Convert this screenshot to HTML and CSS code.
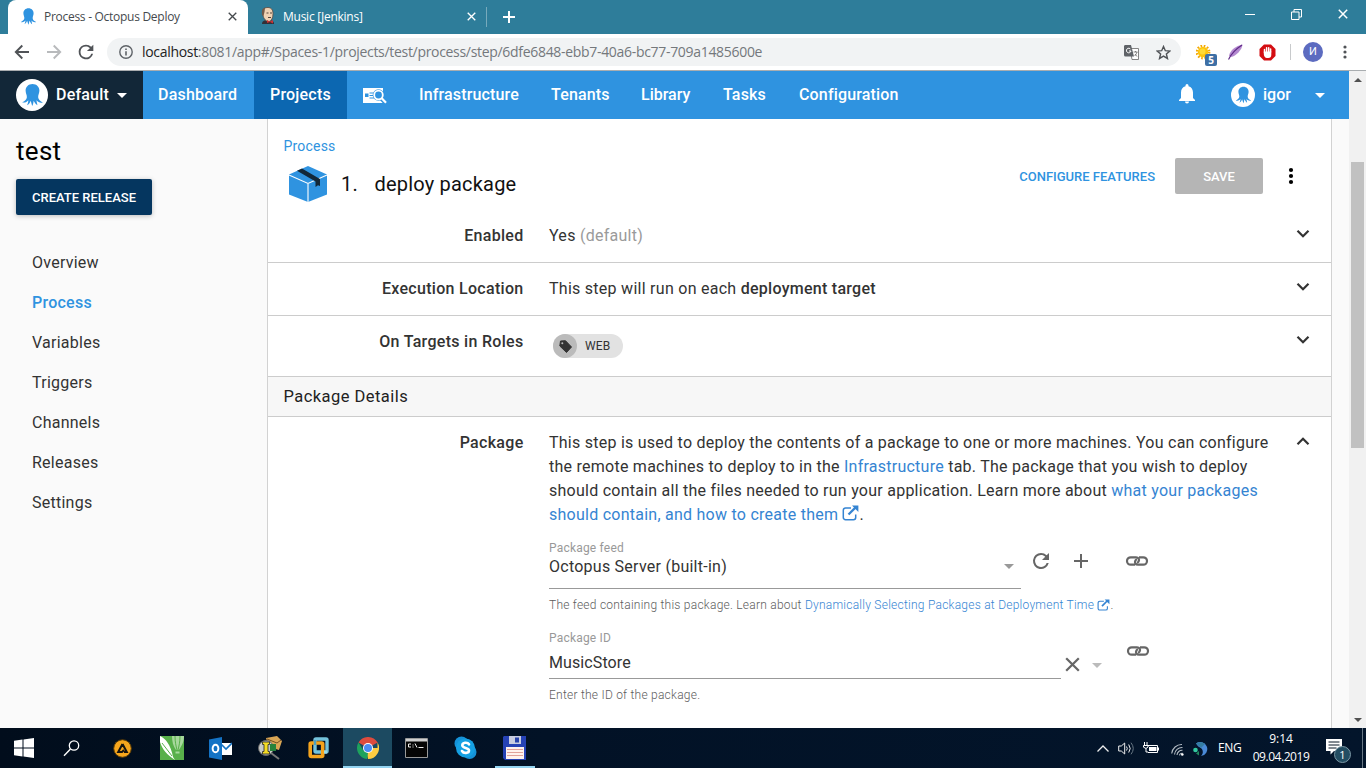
FILE: index.html
```html
<!DOCTYPE html>
<html lang="en">
<head>
<meta charset="utf-8">
<title>Process - Octopus Deploy</title>
<link rel="stylesheet" href="styles.css">
</head>
<body>
<svg class="defs" width="0" height="0">
  <symbol id="octopus" viewBox="0 0 24 24"><path d="M12 .5C7.700.5 4.800 3.500 4.800 7.400c0 2.900 1.600 4.800 1.300 7.200-.3 2.300-2.300 3.900-4.900 5 2.400.9 4.700 0 6.400-2.100.1 1.900-.7 3.700-1.300 5.300 2-.8 3.100-2.700 3.700-4.700.8 1.600.9 3.600 1.700 5.400 1.100-1.600 1.300-3.700 1.500-5.400 1.100 1.500 1.900 3.700 3.900 4.700-.1-1.900-.9-3.400-.9-5.200 1.700 1.900 4 3 6.600 2.200-2.600-1.300-4.800-3-4.900-5.400-.1-2.300 1.300-4.200 1.300-7C19.200 3.500 16.300.5 12 .5z"/></symbol>
  <symbol id="chev" viewBox="0 0 14 10"><path d="M1.500 1.800 7 7.300l5.500-5.500" fill="none" stroke="currentColor" stroke-width="2.200"/></symbol>
  <symbol id="link" viewBox="0 0 24 12"><g fill="none" stroke="currentColor" stroke-width="2.200"><path d="M10 9.700H5.700a3.700 3.700 0 0 1 0-7.400H11c2.600 0 3.700 2.200 2.600 4.200-.4.700-.9 1-1.600 1.300"/><path d="M14 2.300h4.300a3.700 3.700 0 0 1 0 7.400H13c-2.600 0-3.700-2.200-2.600-4.200.4-.7.900-1 1.600-1.300"/></g></symbol>
  <symbol id="ext" viewBox="0 0 17 16"><path d="M9 3H3.500A2.200 2.200 0 0 0 1.300 5.200v7.300a2.200 2.200 0 0 0 2.200 2.200h8a2.200 2.200 0 0 0 2.200-2.200V9.500" fill="none" stroke="currentColor" stroke-width="1.500"/><path d="M6.500 9.500 14 2" stroke="currentColor" stroke-width="2.300"/><path d="M10 .6h6.400V7z" fill="currentColor"/></symbol>
  <symbol id="reload" viewBox="0 0 24 24"><path d="M17.650 6.350A7.960 7.960 0 0 0 12 4a8 8 0 1 0 7.730 10h-2.080A6 6 0 1 1 12 6c1.660 0 3.140.69 4.220 1.780L13 11h7V4z" fill="currentColor"/></symbol>
  <symbol id="cross" viewBox="0 0 10 10"><path d="m.8.8 8.400 8.400M9.200.8.8 9.200" stroke="currentColor" stroke-width="1.500"/></symbol>
</svg>

<header class="tabs">
  <div class="tab active">
    <svg class="fav blue" width="17" height="17"><use href="#octopus"/></svg>
    <span class="t1">Process - Octopus Deploy</span>
    <svg class="close" width="9" height="9"><use href="#cross"/></svg>
  </div>
  <div class="tab second">
    <svg class="fav" width="16" height="18" viewBox="0 0 16 18"><path d="M2 17c0-3 2-4 6-4s6 1 6 4z" fill="#332f36"/><path d="M2.500 5C3 1.500 5 .5 8 .5s5 2 5 6-1.500 8-4.500 8-6-4-6-9.500z" fill="#efd2b4" stroke="#55483f" stroke-width=".8"/><path d="M2 8C1.500 4 2 1 5 .8L4.500 5l-1 4z" fill="#715a49"/><path d="M6.500 6h2M10 6h2M8 10.500h3" stroke="#54443a"/><path d="m7 13 3 1.500 3-1.500v3.500l-3-1.500-3 1z" fill="#c93335"/></svg>
    <span class="t2">Music [Jenkins]</span>
    <svg class="close" width="9" height="9"><use href="#cross"/></svg>
  </div>
  <div class="newtab"><svg width="12" height="12" viewBox="0 0 12 12"><path d="M6 0v12M0 6h12" stroke="#fff" stroke-width="2"/></svg></div>
  <div class="winctl">
    <svg width="10" height="10"><path d="M0 5.500h10" stroke="#fff"/></svg>
    <svg width="11" height="11" viewBox="0 0 11 11"><path d="M.5 3h7.500v7.500H.5zM3 3V.5h7.500V8H8" fill="none" stroke="#fff"/></svg>
    <svg width="10" height="10" class="wclose"><use href="#cross"/></svg>
  </div>
</header>

<div class="toolbar">
  <svg class="nav-i" width="16" height="16" viewBox="0 0 16 16"><path d="M15 8H2M8.300 1.500 1.800 8l6.500 6.500" fill="none" stroke="#505357" stroke-width="1.900"/></svg>
  <svg class="nav-i" width="16" height="16" viewBox="0 0 16 16"><path d="M1 8h13M7.700 1.500 14.200 8l-6.500 6.500" fill="none" stroke="#b8babc" stroke-width="1.900"/></svg>
  <svg class="nav-r" width="22" height="22"><use href="#reload"/></svg>
  <div class="omni">
    <svg width="14" height="14" viewBox="0 0 14 14"><circle cx="7" cy="7" r="6.200" fill="none" stroke="#5f6368" stroke-width="1.400"/><path d="M7 6.200V10.600M7 3.400V5" stroke="#5f6368" stroke-width="1.600"/></svg>
    <span class="url"><b>localhost</b>:8081/app#/Spaces-1/projects/test/process/step/6dfe6848-ebb7-40a6-bc77-709a1485600e</span>
    <svg class="trans" width="15" height="15" viewBox="0 0 15 15"><path d="M6 3.500h8.500v11H8z" fill="#fff" stroke="#777" stroke-width=".9"/><path d="M1 0h6l3 11.500H1.500A1.500 1.500 0 0 1 0 10V1.300A1.300 1.300 0 0 1 1 0z" fill="#5f6368"/><path d="M6.700 4.300A2.300 2.300 0 1 0 7 6H5" fill="none" stroke="#fff" stroke-width="1"/><path d="M9.500 7h4M11.500 6v1M13 7c-.5 2-1.500 3-2.500 4M11 9l2 2.500" fill="none" stroke="#666" stroke-width=".8"/></svg>
    <svg class="star" width="15" height="15" viewBox="0 0 24 24"><path d="m12 2.500 2.900 6.600 7.100.6-5.400 4.700 1.700 7.100-6.300-3.800-6.300 3.800 1.700-7.100L2 9.700l7.100-.6z" fill="none" stroke="#505357" stroke-width="2.300"/></svg>
  </div>
  <div class="exts">
    <svg width="21" height="21" viewBox="0 0 21 21"><g transform="translate(7 7)"><circle r="6.200" fill="none" stroke="#f4a806" stroke-width="2.400" stroke-dasharray="1.600 1.650"/><circle r="5.200" fill="#fcc40c"/><circle r="3" cx="-.5" cy="-.5" fill="#ffda35"/></g><rect x="9" y="9" width="12" height="12" rx="2" fill="#3d6fa5"/><text x="15" y="18.700" class="badge">5</text></svg>
    <svg width="15" height="16" viewBox="0 0 15 16"><path d="M1 12C2 6 8 2 14.500.5 14 6 8 12 3 13z" fill="#b48ad0"/><path d="M.5 15.500C3 10 8 5 14 1" fill="none" stroke="#5f2a86" stroke-width="1.200"/></svg>
    <svg width="17" height="17" viewBox="0 0 17 17"><path d="M5 .5h7L16.500 5v7L12 16.500H5L.5 12V5z" fill="#d40d12"/><path d="M5.500 8.500V5.500M7.600 8V3.800M9.700 8V3.800M11.600 8V5" stroke="#fff" stroke-width="1.500" stroke-linecap="round"/><path d="M4.800 7.500h7.500V11a3 3 0 0 1-3 3h-1.300c-2 0-3.200-2-3.200-4z" fill="#fff"/></svg>
    <i class="sep"></i>
    <span class="ava">И</span>
    <svg width="4" height="14" viewBox="0 0 4 14" fill="#505357"><circle cx="2" cy="2" r="1.600"/><circle cx="2" cy="7" r="1.600"/><circle cx="2" cy="12" r="1.600"/></svg>
  </div>
</div>

<div class="viewport">
  <div class="page">
    <nav class="appnav">
      <div class="space"><span class="round big"><svg width="23" height="24"><use href="#octopus"/></svg></span><span class="n0">Default</span><i class="tri"></i></div>
      <a class="n1">Dashboard</a>
      <a class="n2 on">Projects</a>
      <svg class="rs" width="24" height="17" viewBox="0 0 24 17"><path d="M0 1h20v15H0z" fill="#fff"/><path d="M2 6.500h3.500v3.500H2zM6.500 5.500h4v1h-4zM6.500 8h3.500v1H6.500zM6.500 10.500h4.500v1H6.500z" fill="#2f93e0"/><circle cx="15.500" cy="8" r="5.800" fill="#2f93e0"/><path d="m18.500 11 5 5.500" stroke="#2f93e0" stroke-width="5"/><circle cx="15.500" cy="8" r="4.300" fill="none" stroke="#fff" stroke-width="1.800"/><path d="m18.500 11 4.500 4.800" stroke="#fff" stroke-width="2.200"/></svg>
      <a class="n3">Infrastructure</a>
      <a class="n4">Tenants</a>
      <a class="n5">Library</a>
      <a class="n6">Tasks</a>
      <a class="n7">Configuration</a>
      <div class="user">
        <svg class="bell" width="16" height="20" viewBox="0 0 16 20"><path d="M8 19.500a2 2 0 0 0 2-2H6a2 2 0 0 0 2 2zM14 14V8.500c0-3-1.600-5.600-4.500-6.300V1.600a1.500 1.500 0 0 0-3 0v.6C3.600 2.900 2 5.400 2 8.500V14l-2 2v1h16v-1z" fill="#fff"/></svg>
        <span class="round small"><svg width="17" height="18"><use href="#octopus"/></svg></span>
        <span class="igor">igor</span><i class="tri"></i>
      </div>
    </nav>
    <div class="body">
      <aside class="side">
        <h1>test</h1>
        <button class="create"><span>CREATE RELEASE</span></button>
        <ul>
          <li>Overview</li><li class="cur">Process</li><li>Variables</li><li>Triggers</li><li>Channels</li><li>Releases</li><li>Settings</li>
        </ul>
      </aside>
      <main class="panel">
        <div class="head">
          <div class="titles">
            <a class="crumb">Process</a>
            <div class="title">
              <svg width="40" height="38" viewBox="0 0 40 38"><path d="M20 1 39 9.500v20L20 37 1 29.500v-20z" fill="#2f93e0"/><path d="M1 10l19 8.500L39 10M20 18.500V37" fill="none" stroke="#fff" stroke-width="1.100"/><path d="m9 5.700 5-2.200 18 10.500v7l-2-.8-2.500 1.800v-5.500z" fill="#122738"/></svg>
              <span class="num">1.</span><span class="name">deploy package</span>
            </div>
          </div>
          <div class="acts">
            <a class="conf">CONFIGURE FEATURES</a>
            <button class="save"><span>SAVE</span></button>
            <svg width="6" height="18" viewBox="0 0 6 18"><circle cx="3" cy="3" r="2.100"/><circle cx="3" cy="9" r="2.100"/><circle cx="3" cy="15" r="2.100"/></svg>
          </div>
        </div>
        <section class="row r1"><b class="l1">Enabled</b><div class="val"><span class="v1">Yes <em>(default)</em></span></div><svg class="chev" width="14" height="10"><use href="#chev"/></svg></section>
        <section class="row r2"><b class="l2">Execution Location</b><div class="val"><span class="v2">This step will run on each <strong>deployment target</strong></span></div><svg class="chev" width="14" height="10"><use href="#chev"/></svg></section>
        <section class="row r3"><b class="l3">On Targets in Roles</b><div class="val"><span class="chip"><i><svg width="13" height="13" viewBox="0 0 13 13"><path d="M1.500 1 6.500.7 12.500 7 7.500 12.500.8 6z" fill="#333" stroke="#333" stroke-linejoin="round"/><circle cx="3.300" cy="3.200" r="1" fill="#bbb"/></svg></i><span>WEB</span></span></div><svg class="chev" width="14" height="10"><use href="#chev"/></svg></section>
        <h2><span>Package Details</span></h2>
        <section class="row r4"><b class="l4">Package</b>
          <div class="val">
            <p class="desc"><span class="d1">This step is used to deploy the contents of a package to one or more machines. You can configure</span><br><span class="d2">the remote machines to deploy to in the <a>Infrastructure</a> tab. The package that you wish to deploy</span><br><span class="d3">should contain all the files needed to run your application. Learn more about <a>what your packages</a></span><br><span class="d4"><a>should contain, and how to create them</a> <a><svg width="17" height="16"><use href="#ext"/></svg></a>.</span></p>
            <div class="field">
              <div class="input f1"><label>Package feed</label><div><span class="fv">Octopus Server (built-in)</span><i class="drop"></i></div></div>
              <svg class="fr" width="24" height="24"><use href="#reload"/></svg>
              <svg class="fp" width="14" height="14" viewBox="0 0 14 14"><path d="M7 0v14M0 7h14" stroke="#666" stroke-width="2"/></svg>
              <svg class="fl" width="24" height="12"><use href="#link"/></svg>
            </div>
            <p class="help h1t">The feed containing this package. Learn about <a>Dynamically Selecting Packages at Deployment Time <svg width="13" height="12"><use href="#ext"/></svg></a>.</p>
            <div class="field second-f">
              <div class="input f2"><label>Package ID</label><div><span class="fw">MusicStore</span></div></div>
              <svg class="fx" width="15" height="15"><use href="#cross"/></svg>
              <i class="drop light"></i>
              <svg class="fl2" width="24" height="12"><use href="#link"/></svg>
            </div>
            <p class="help h2t">Enter the ID of the package.</p>
          </div>
          <svg class="chev up" width="14" height="10"><use href="#chev"/></svg>
        </section>
      </main>
    </div>
  </div>
  <div class="scroll"><i class="su"></i><div class="thumb"></div><i class="sd"></i></div>
</div>

<footer class="taskbar">
  <div class="slot s48"><svg width="20" height="20" viewBox="0 0 20 20" fill="#fff"><path d="M0 2.800 8.500 1.600v7.900H0zM9.500 1.400 20 0v9.500H9.500zM0 10.500h8.500v7.900L0 17.200zM9.500 10.500H20V20L9.500 18.600z"/></svg></div>
  <div class="slot s50"><svg width="17" height="17" viewBox="0 0 17 17"><circle cx="11" cy="5.500" r="4.700" fill="none" stroke="#fff" stroke-width="1.300"/><path d="M7.500 9 1 15.800" stroke="#fff" stroke-width="1.400"/></svg></div>
  <div class="slot"><svg width="19" height="19" viewBox="0 0 19 19"><circle cx="9.500" cy="9.500" r="8.800" fill="#f6a61d" stroke="#5a3b05"/><path d="m9.500 5 4.300 8H11M9.500 5l-4.300 8H9l2-2" fill="none" stroke="#17140f" stroke-width="2"/></svg></div>
  <div class="slot"><svg width="24" height="24" viewBox="0 0 24 24"><path d="M0 0h24v24H0z" fill="#58b04a"/><path d="M12 0h12c0 6-2 9-5 14h-3c-3-4-4-9-4-14z" fill="#a7d89c"/><path d="M15 0c0 6 1 10 2 14M20 0c0 6-1 10-2 14" stroke="#58b04a" fill="none"/><path d="M15.500 15.500h4v2h-4z" fill="#a7d89c"/><path d="M0 0c5 2 11 9 13 21l2 3C7 19 2 13 0 6z" fill="#fff"/><path d="m2 7 10 13" stroke="#58b04a"/></svg></div>
  <div class="slot"><svg width="23" height="23" viewBox="0 0 23 23"><path d="M11 6h12v12H11z" fill="#fff"/><path d="m12 7 5 5 6-6" fill="none" stroke="#1473c5" stroke-width="1.600"/><path d="M0 2.500 13 0v23L0 20.500z" fill="#1473c5"/><ellipse cx="6.500" cy="11.500" rx="2.900" ry="3.700" fill="none" stroke="#fff" stroke-width="1.900"/></svg></div>
  <div class="slot"><svg width="24" height="24" viewBox="0 0 24 24"><path d="M8 2 19 0l5 5-3 9-10-3z" fill="#d9a655"/><path d="m9 3 10 4 4-3" stroke="#735023" fill="none"/><circle cx="8" cy="12" r="7.500" fill="#c7cac7" stroke="#666"/><path d="m13 17 8 6" stroke="#777" stroke-width="2"/><path d="M12 8h6v7h-6z" fill="#27823b"/><path d="M4.500 6h7v2.500H10v7h1.500V18h-7v-2.500H6v-7H4.500z" fill="#f5dc24" stroke="#222" stroke-width=".8"/></svg></div>
  <div class="slot"><svg width="21" height="22" viewBox="0 0 21 22"><rect x="7" y="2" width="12" height="13" rx="1" fill="none" stroke="#74c3dc" stroke-width="3.400"/><rect x="2.200" y="6" width="12.500" height="13.500" rx="1" fill="none" stroke="#f5a41d" stroke-width="3.600"/><path d="M7 8V3" stroke="#4e9fc0" stroke-width="2.500"/><path d="M16 15h3" stroke="#9bd8e8" stroke-width="3"/></svg></div>
  <div class="slot lit under"><svg width="22" height="22" viewBox="0 0 22 22"><path d="M11 11 1.470 5.500A11 11 0 0 1 20.530 5.500z" fill="#dd4b3e"/><path d="M11 11H20.530V5.500A11 11 0 0 1 11 22l-1-5z" fill="#ffcd41"/><path d="M1.470 5.500 6.500 13.500 11 16l-1 6A11 11 0 0 1 1.470 5.500z" fill="#1ea25d"/><path d="M11 6h9.800l-.3-.5-9.500-2z" fill="#dd4b3e"/><circle cx="11" cy="11" r="5" fill="#fff"/><circle cx="11" cy="11" r="4" fill="#4b8cf5"/></svg></div>
  <div class="slot"><svg width="23" height="20" viewBox="0 0 23 20"><path d="M.5.5h22v19H.5z" fill="#050505" stroke="#999"/><path d="M1 1h21v2.500H1z" fill="#cfcfcf"/><path d="M6 6H3.500v3H6M8 6.500v1M8 8.500v1M10 5.500l2 4M13.500 9.500h5" fill="none" stroke="#eee"/></svg></div>
  <div class="slot"><svg width="23" height="24" viewBox="0 0 23 24"><circle cx="7.500" cy="7.500" r="7" fill="#1592d8"/><circle cx="15.500" cy="16" r="7" fill="#1592d8"/><circle cx="11.500" cy="12" r="9.500" fill="#15a0e3"/><path d="M15 8.300C13.500 6 8.300 6.300 8.300 9.300c0 3.500 6.700 1.800 6.700 5.200 0 3-5.500 3.200-7 .5" fill="none" stroke="#fff" stroke-width="2.600" stroke-linecap="round"/></svg></div>
  <div class="slot under disk"><svg width="24" height="24" viewBox="0 0 24 24"><path d="M1 0h22v24H2l-2-2V1z" fill="#2642b5"/><path d="M6 0h12v8H6z" fill="#c8cde0"/><path d="M12 1.500h4v5h-4z" fill="#2742aa"/><path d="M3 11h18v12H3z" fill="#fff2ed"/><path d="M4 13.500h16M4 16.500h16M4 19.500h16" stroke="#e1a29a"/></svg></div>
  <div class="tray">
    <svg width="12" height="7" viewBox="0 0 12 7"><path d="M.5 6.500 6 1l5.500 5.500" fill="none" stroke="#eee" stroke-width="1.300"/></svg>
    <svg class="spk" width="17" height="15" viewBox="0 0 17 15"><path d="M.7 5h2.600L6.700 2v11L3.300 10H.7zM8.500 5.500q1.500 2 0 4M10.700 3.500q3 4 0 8" fill="none" stroke="#eee"/><path d="M13 1.700q4.500 5.800 0 11.600" fill="none" stroke="#687784"/></svg>
    <svg class="bat" width="16" height="12" viewBox="0 0 16 12"><path d="M5 3.500h9.500v7H5" fill="none" stroke="#fff"/><path d="M6 5h7.500v4H6zM14.500 5.500H16v3h-1.500z" fill="#fff"/><path d="M1.500 0v3M4 0v3M.5 3.500H5V5L3 6.500V10H5M.5 3.500v1.700L3 6.500" fill="none" stroke="#fff"/></svg>
    <svg class="wifi" width="13" height="13" viewBox="0 0 13 13"><path d="M.7 10.500A10 10 0 0 1 11 1.500M3.500 11.500a7.500 7.500 0 0 1 8-7M6 12a5 5 0 0 1 5.500-4.700M8.500 12.300a2.500 2.500 0 0 1 3-2" fill="none" stroke="#b4bdc5" stroke-width="1.100"/><circle cx="11.300" cy="11.500" r="1.300" fill="#fff"/></svg>
    <svg class="globe" width="15" height="15" viewBox="0 0 15 15"><path d="M3 2.500A7 7 0 1 1 8 15c3-3 2-7-1-8.500C5 5.500 4 4 3 2.500z" fill="#4a8ad7"/><path d="M3 2.500C5 .7 10 .5 12 3L8 7z" fill="#347da1"/><circle cx="2.500" cy="9" r="2.300" fill="#32c9a0"/><path d="M3 12.500 6 10v4.500z" fill="#20875e"/></svg>
    <span class="eng">ENG</span>
    <div class="clock"><span class="c1">9:14</span><span class="c2">09.04.2019</span></div>
    <div class="note"><svg width="16" height="16" viewBox="0 0 16 16"><path d="M0 0h16v12H8l-3.500 3.500V12H0z" fill="#fff"/><path d="M2.500 3h11M2.500 6h11M2.500 9h8" stroke="#071525"/></svg><span>1</span></div>
    <i class="edge"></i>
  </div>
</footer>
</body>
</html>
```
FILE: styles.css
```css
* { box-sizing: border-box; }
body { margin: 0; width: 1366px; height: 768px; overflow: hidden; display: flex; flex-direction: column; font-family: Roboto, sans-serif; background: #fff; color: #333; }
.defs { position: absolute; }
svg { display: block; flex: none; }
span, a, b { white-space: nowrap; }

/* browser tabs */
.tabs { height: 34px; background: #2e7d9a; display: flex; flex: none; font: 12px "Open Sans", "Noto Sans", sans-serif; padding-left: 8px; }
.tab { display: flex; align-items: center; }
.tab.active { width: 240px; background: #fff; border-radius: 8px 8px 0 0; padding: 0 11px 2px 12px; color: #45494d; }
.tab.second { width: 239px; padding: 0 11px 2px 12px; color: #fff; }
.fav.blue { fill: #2f93e0; margin-right: 7px; }
.second .fav { margin-right: 7px; }
.close { margin-left: auto; margin-top: 1px; }
.t1 { letter-spacing: -.28px; }
.t2 { letter-spacing: -.25px; }
.newtab { border-left: 1px solid #77aabc; height: 20px; margin: 7px 0 0 -1px; padding: 4px 0 0 16px; }
.winctl { margin-left: auto; display: flex; align-items: center; gap: 36px; padding: 0 18px 6px 0; }
.wclose { color: #fff; }

/* address bar */
.toolbar { height: 37px; flex: none; display: flex; align-items: center; border-bottom: 1px solid #a9adb0; padding-left: 14px; color: #505357; }
.nav-i { margin-right: 16px; }
.nav-r { margin-right: 10px; margin-left: -3px; }
.omni { width: 1074px; height: 28px; background: #f1f3f4; border-radius: 14px; display: flex; align-items: center; padding: 0 10px 0 12px; }
.url { font: 14px "Open Sans", "Noto Sans", sans-serif; color: #74787c; margin: -2px 0 0 9px; letter-spacing: -.31px; }
.url b { font-weight: 400; color: #222; }
.trans { margin-left: auto; margin-right: 17px; }
.exts { display: flex; align-items: center; margin-left: 15px; }
.exts > svg:nth-child(1) { margin: 7px 11px 0 0; }
.exts > svg:nth-child(2) { margin-right: 16px; }
.sep { width: 1px; height: 16px; background: #c8cacc; margin: 0 12px 0 14px; }
.ava { width: 20px; height: 20px; border-radius: 50%; background: #5c6bc0; color: #fff; font-size: 11px; line-height: 20px; text-align: center; margin-right: 20px; }
.badge { font: 700 10px "Open Sans", sans-serif; fill: #fff; text-anchor: middle; }

.viewport { flex: 1; min-height: 0; display: flex; }
.page { width: 1349px; display: flex; flex-direction: column; background: #fafafa; }

/* application bar */
.appnav { height: 48px; flex: none; background: #2f93e0; color: #fff; display: flex; font-size: 16px; font-weight: 500; line-height: 48px; }
.space { width: 143px; background: #122738; display: flex; align-items: center; padding-left: 16px; }
.round { border-radius: 50%; background: #fff; display: flex; align-items: center; justify-content: center; }
.big { width: 32px; height: 32px; fill: #2f93e0; margin-right: 8px; }
.small { width: 24px; height: 24px; fill: #2f93e0; margin: 0 8px 0 36px; }
.tri { border: 5px solid transparent; border-top-color: #fff; border-bottom: 0; margin-top: 1px; }
.n0 { width: 61px; letter-spacing: .2px; }
.n1 { width: 111px; padding-left: 15px; letter-spacing: .2px; }
.on { width: 93px; background: #0c67b1; padding-left: 16px; letter-spacing: .2px; }
.rs { margin: 16px 31px 0 16px; }
.n3 { width: 133px; padding-left: 1px; letter-spacing: .15px; }
.n4 { width: 90px; letter-spacing: .15px; }
.n5 { width: 82px; }
.n6 { width: 76px; letter-spacing: .15px; }
.n7 { letter-spacing: .15px; }
.user { margin-left: auto; display: flex; align-items: center; padding-right: 24px; }
.igor { width: 52px; }
.bell { margin-bottom: 3px; }

.body { flex: 1; min-height: 0; display: flex; }
.side { width: 267px; padding: 16px 16px 0; }
h1 { margin: 0 0 12px; font-size: 26px; font-weight: 400; line-height: 32px; color: #000; letter-spacing: .3px; }
button { border: 0; font-family: inherit; padding: 0; display: block; }
.create { width: 136px; height: 36px; background: #05365f; color: #fff; border-radius: 2px; font-size: 13px; font-weight: 500; box-shadow: 0 1px 5px rgba(0,0,0,.25); }
.side ul { list-style: none; margin: 28px 0 0 16px; padding: 0; }
.side li { height: 40px; line-height: 40px; font-size: 16px; letter-spacing: .25px; }
.side .cur { color: #2f93e0; font-weight: 500; }

/* step editor */
.panel { width: 1065px; background: #fff; border: solid #d2d2d2; border-width: 0 1px; overflow: hidden; }
.head { height: 90px; display: flex; padding: 17px 37px 0 15px; justify-content: space-between; }
.crumb { display: block; font-size: 14px; line-height: 20px; color: #2f93e0; letter-spacing: .2px; padding-left: .5px; }
.title { display: flex; align-items: center; height: 38px; margin: 9px 0 0 5px; font-size: 20px; color: #111; }
.num { margin-left: 13px; width: 33.5px; letter-spacing: .3px; }
.name { letter-spacing: .2px; }
.acts { display: flex; align-items: center; height: 36px; margin-top: 22px; }
.conf { color: #2f93e0; font-weight: 500; font-size: 13px; margin-right: 20px; }
.save { width: 88px; height: 36px; background: #b5b5b5; color: #fff; border-radius: 2px; font-size: 13px; font-weight: 500; margin-right: 25px; }
.row { display: flex; border-bottom: 1px solid #ccc; font-size: 16px; line-height: 24px; }
.row > b { width: 255.5px; text-align: right; font-weight: 500; letter-spacing: .3px; }
.val { width: 740px; margin-left: 25.5px; }
.row > .chev { margin: 5px 0 0 7px; }
.row > .up { transform: rotate(180deg); }
.r1 { height: 54px; padding-top: 15px; }
.r2, .r3 { padding-top: 14px; height: 53px; }
.r3 { height: 61px; }
.v1, .v2 { letter-spacing: .27px; }
em { font-style: normal; color: #9a9a9a; }
strong { font-weight: 500; }
.chip { display: flex; width: 70px; height: 24px; border-radius: 12px; background: #e2e2e2; font-size: 12px; margin: 4px 0 0 4px; }
.chip i { width: 24px; height: 24px; border-radius: 50%; background: #bbb; display: grid; place-items: center; }
.chip > span { margin-left: 8px; letter-spacing: .2px; }
h2 { margin: 0; height: 40px; background: #f7f7f7; border-bottom: 1px solid #ccc; padding-left: 15.500px; font-size: 16.500px; line-height: 39px; font-weight: 400; color: #222; letter-spacing: .45px; }
.r4 { padding-top: 14px; height: 400px; }
.r4 a { color: #3584d2; }
.desc { margin: 0; letter-spacing: .25px; }
.desc svg, .help svg { display: inline-block; vertical-align: -2px; }
.desc svg { vertical-align: -1px; }
.field { display: flex; height: 48px; margin-top: 14px; color: #666; }
.input { border-bottom: 1px solid #999; height: 48px; }
.input label { display: block; font-size: 12px; line-height: 14px; color: #999; letter-spacing: .2px; }
.input > div { display: flex; align-items: center; justify-content: space-between; color: #333; height: 24px; }
.f1 { width: 472px; }
.f1 > div { padding-right: 7px; }
.f2 { width: 512px; }
.f2 > div { margin-top: 6px; }
.fv { letter-spacing: .25px; }
.fw { letter-spacing: .1px; }
.drop { border: 5px solid transparent; border-top-color: #999; border-bottom: 0; }
.input .drop { margin-top: -1px; }
.light { height: 5px; border-top-color: #bbb; margin: 32px 24px 0 12px; }
.fr { margin: 8px 0 0 8px; }
.fp { margin: 13px 0 0 21px; }
.fl { margin: 14px 0 0 37px; }
.fx { margin: 26px 0 0 4px; }
.fl2 { margin-top: 14px; }
.help { margin: 5px 0 0; font-size: 12px; line-height: 22px; color: #5c5c5c; letter-spacing: .24px; font-weight: 300; white-space: nowrap; }
.second-f { margin-top: 15px; }

.scroll { width: 17px; background: #f1f1f1; display: flex; flex-direction: column; align-items: center; padding: 7px 0 6px; }
.thumb { width: 13px; height: 286px; background: #c1c1c1; margin-top: 80px; }
.su, .sd { border: 4px solid transparent; border-top: 0; border-bottom-color: #505050; }
.sd { margin-top: auto; transform: rotate(180deg); }

/* task bar */
.taskbar { height: 40px; flex: none; background: linear-gradient(90deg, #010d1c, #021226 40%, #03152b); display: flex; color: #fff; font-family: "Open Sans", "Noto Sans", sans-serif; }
.slot { width: 49px; height: 40px; display: flex; align-items: center; justify-content: center; }
.s48 { width: 48px; }
.s50 { width: 50px; padding-right: 3px; }
.lit { background: #1c4a61; }
.under { border-bottom: 2px solid #93d4f1; padding-top: 1px; }
.disk { width: 40px; margin-left: 5px; }
.tray { margin-left: auto; display: flex; align-items: center; font-size: 12px; }
.spk { margin-left: 9px; }
.bat { margin-left: 8px; }
.wifi { margin-left: 12px; margin-top: 2px; }
.globe { margin-left: 9px; }
.eng { margin: -2px 0 0 10px; width: 35px; letter-spacing: -.4px; }
.clock { display: flex; flex-direction: column; align-items: center; width: 56px; line-height: 18px; margin-top: -1px; }
.c2 { letter-spacing: -.45px; }
.note { position: relative; margin-left: 17px; width: 36px; padding-bottom: 3px; }
.note span { position: absolute; left: 8px; top: 7px; width: 17px; height: 17px; border-radius: 50%; background: #234d62; border: 1px solid #7c98a6; line-height: 15px; text-align: center; font-size: 11px; }
.edge { width: 1px; height: 40px; background: #687784; margin-right: 3px; }
```
